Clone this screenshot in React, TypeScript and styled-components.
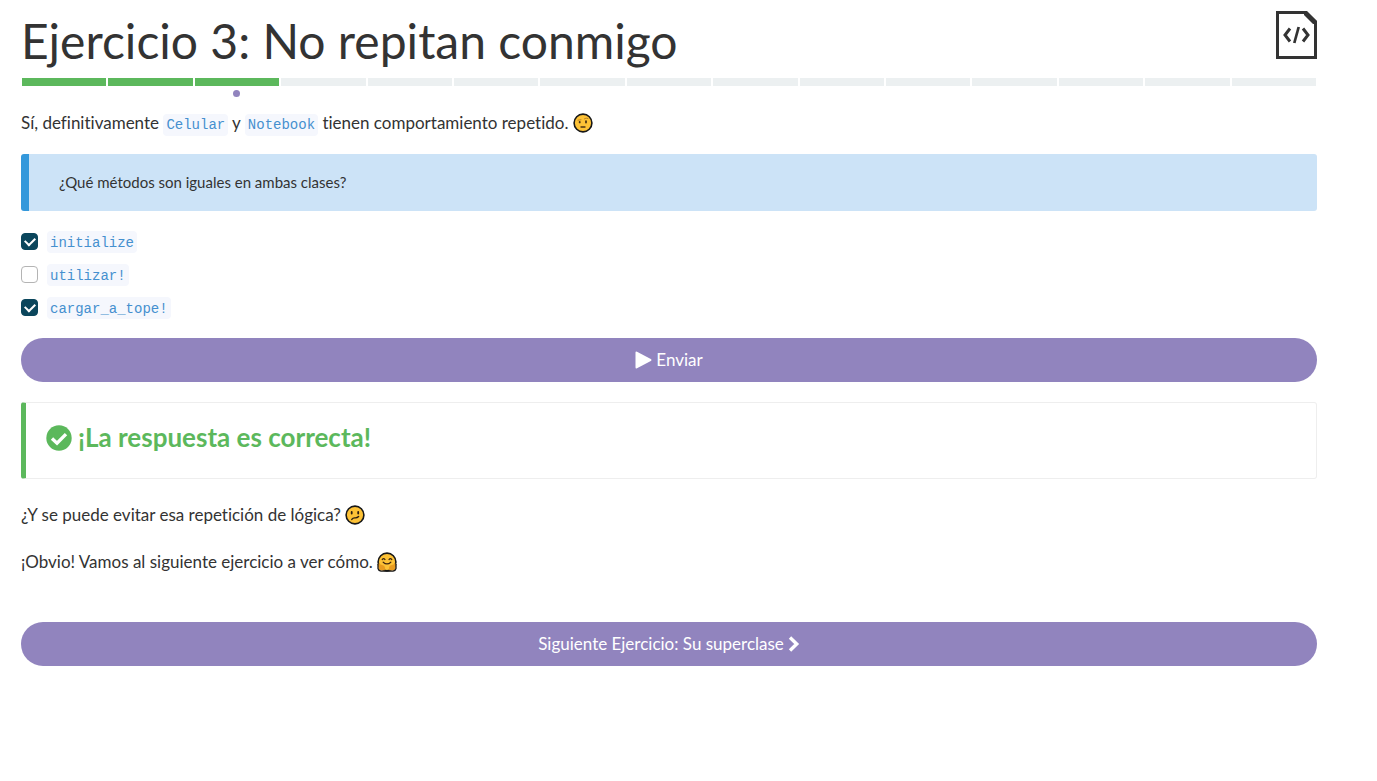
import React from 'react';
import styled, { createGlobalStyle } from 'styled-components';

const GlobalStyle = createGlobalStyle`
  * { box-sizing: border-box; }
  body {
    margin: 0;
    background: #fff;
    color: #333;
    font-family: Lato, "Open Sans", sans-serif;
    font-size: 17px;
    line-height: 24px;
    font-variant-ligatures: no-common-ligatures;
  }
`;

const Page = styled.main`
  display: flex;
  flex-direction: column;
  padding: 8px 60px 40px 21px;
`;

const Header = styled.header`
  display: flex;
  align-items: flex-start;
  justify-content: space-between;
  height: 70px;
`;

const Title = styled.h1`
  margin: 0;
  font-size: 48px;
  font-weight: 400;
  line-height: 66px;
`;

const FileLink = styled.a`
  display: block;
  margin-top: 3px;
  color: #333;
  svg { display: block; }
`;

const Progress = styled.ol`
  display: flex;
  gap: 2px;
  margin: 0;
  padding: 0 1px;
  list-style: none;
`;

const Step = styled.li<{ $done?: boolean }>`
  position: relative;
  flex: 1;
  height: 8px;
  background: ${(p) => (p.$done ? '#5cb85c' : '#ecf0f1')};
`;

const CurrentDot = styled.span`
  position: absolute;
  top: 12px;
  left: calc(50% - 4px);
  width: 7px;
  height: 7px;
  border-radius: 50%;
  background: #9184be;
`;

const Paragraph = styled.p`
  margin: 0 0 23px;
`;

const Intro = styled(Paragraph)`
  margin: 25px 0 18px;
`;

const Code = styled.code`
  display: inline-block;
  padding: 0 3px;
  border-radius: 4px;
  background: #f5f7fd;
  color: #4590cf;
  font-family: "Liberation Mono", monospace;
  font-size: 14px;
  line-height: 22px;
`;

const EmojiSvg = styled.svg`
  display: inline-block;
  width: 20px;
  height: 20px;
  vertical-align: -4px;
`;

const Question = styled.blockquote`
  margin: 0 0 20px;
  padding: 16px 30px 17px;
  border-left: 8px solid #3498db;
  border-radius: 3px;
  background: #cce3f7;
  font-size: 15px;
`;

const Choices = styled.form`
  display: flex;
  flex-direction: column;
`;

const Choice = styled.label`
  display: flex;
  align-items: center;
  gap: 9px;
  height: 22px;
  margin-bottom: 11px;
  ${Code} {
    padding-top: 2px;
    line-height: 20px;
  }
`;

const Checkbox = styled.input`
  appearance: none;
  display: grid;
  place-items: center;
  width: 17px;
  height: 17px;
  margin: 0 0 2px;
  border: 1px solid #b4b4b4;
  border-radius: 4px;
  background: #fff;
  &:checked {
    border-color: #0b465c;
    background: #0b465c;
  }
  &:checked::after {
    content: '';
    width: 8px;
    height: 5px;
    margin-bottom: 2px;
    border: solid #fff;
    border-width: 0 0 2px 2px;
    transform: rotate(-45deg);
  }
`;

const PillButton = styled.button`
  display: flex;
  align-items: center;
  justify-content: center;
  gap: 4px;
  width: 100%;
  height: 44px;
  margin-top: 8px;
  padding: 0 20px 1px;
  border: 0;
  border-radius: 22px;
  background: #9184be;
  color: #fff;
  font: inherit;
  font-variant-ligatures: inherit;
  font-size: 17px;
  text-decoration: none;
`;

const NextLink = styled(PillButton)`
  margin-top: 25px;
`;

const Result = styled.section`
  margin: 20px 0 24px;
  padding: 19px 20px 25px;
  border: 1px solid #eee;
  border-left: 5px solid #5cb85c;
  border-radius: 3px;
`;

const ResultTitle = styled.h2`
  display: flex;
  align-items: center;
  gap: 6px;
  margin: 0;
  color: #5cb85c;
  font-size: 26px;
  font-weight: 700;
  line-height: 31px;
`;

type Mood = 'doubtful' | 'confused' | 'hugging';
const moodLabels: Record<Mood, string> = {
  doubtful: 'Cara con ceja levantada',
  confused: 'Cara confundida',
  hugging: 'Cara abrazando',
};

function Emoji({ mood }: { mood: Mood }) {
  return (
    <EmojiSvg viewBox="0 0 20 20" role="img" aria-label={moodLabels[mood]}>
      <circle cx="10" cy="10" r="8.9" fill="#fdc236" stroke="#171717" strokeWidth="1.6" />
      {mood === 'doubtful' && (
        <g fill="none" stroke="#493213" strokeLinecap="round">
          <path d="M11.3 5.8 Q13 4.4 15 5.5 M5 7.2 L8 6.8" stroke="#b27b22" strokeWidth="0.9" />
          <path d="M6.7 8.8v.6 M13 8.2v1.4" strokeWidth="1.8" />
          <path d="M8 14H12" strokeWidth="1.3" />
        </g>
      )}
      {mood === 'confused' && (
        <g fill="none" stroke="#2b1c10" strokeLinecap="round">
          <path d="M6.7 7v1.5 M13.2 7v1.5" strokeWidth="1.8" />
          <path d="M6.8 14.4Q8 12.7 10 12.9T13.6 11.6" strokeWidth="1.4" />
        </g>
      )}
      {mood === 'hugging' && (
        <>
          <g fill="none" stroke="#3c2610" strokeWidth="1.2" strokeLinecap="round">
            <path d="M5.2 7.6Q6.6 5.5 8 7.6 M12 7.6Q13.4 5.5 14.8 7.6" />
            <path d="M6.2 10.2Q10 13.6 13.8 10.2" />
          </g>
          <path d="M1 12.4Q2 10.8 3 12.2L7.2 13.8Q9 15.8 7.5 18.6H3Q1 17 1 12.4Z M19 12.4Q18 10.8 17 12.2L12.8 13.8Q11 15.8 12.5 18.6H17Q19 17 19 12.4Z" fill="#e89c20" />
          <path d="M1 12v4.5Q1.5 18.7 4 19.1H16Q18.5 18.7 19 16.5V12" fill="none" stroke="#171717" strokeWidth="1.3" />
        </>
      )}
    </EmojiSvg>
  );
}

const TOTAL_STEPS = 15;
const CURRENT_STEP = 3;
const options = [
  { id: 'initialize', checked: true },
  { id: 'utilizar!', checked: false },
  { id: 'cargar_a_tope!', checked: true },
];

export default function App() {
  return (
    <>
      <GlobalStyle />
      <Page>
        <Header>
          <Title>Ejercicio 3: No repitan conmigo</Title>
          <FileLink href="#solucion" aria-label="Ver código">
            <svg width="41" height="48" viewBox="0 0 41 48" fill="none" stroke="currentColor">
              <path d="M1.5 1.5H29.5L39.5 11V46.5H1.5Z" strokeWidth="3" />
              <path d="M28 0H31L41 10V13H37L28 4Z" fill="currentColor" stroke="none" />
              <path d="M14 17.5L9 24L14 30.5 M27 17.5L32 24L27 30.5" strokeWidth="3" />
              <path d="M22.7 16L18.3 32" strokeWidth="2.7" />
            </svg>
          </FileLink>
        </Header>
        <Progress aria-label="Progreso">
          {Array.from({ length: TOTAL_STEPS }, (_, i) => (
            <Step key={i} $done={i < CURRENT_STEP}>
              {i === CURRENT_STEP - 1 && <CurrentDot />}
            </Step>
          ))}
        </Progress>
        <Intro>
          Sí, definitivamente <Code>Celular</Code> y <Code>Notebook</Code> tienen comportamiento repetido. <Emoji mood="doubtful" />
        </Intro>
        <Question>¿Qué métodos son iguales en ambas clases?</Question>
        <Choices onSubmit={(e) => e.preventDefault()}>
          {options.map((o) => (
            <Choice key={o.id} htmlFor={o.id}>
              <Checkbox type="checkbox" id={o.id} defaultChecked={o.checked} />
              <Code>{o.id}</Code>
            </Choice>
          ))}
          <PillButton type="submit">
            <svg width="17" height="18" viewBox="0 0 17 18" fill="currentColor" aria-hidden="true">
              <path d="M0.5 1.8Q.5 .1 2 .8L15.8 8Q17.2 9 15.8 10L2 17.2Q.5 17.9 .5 16.2Z" />
            </svg>
            Enviar
          </PillButton>
        </Choices>
        <Result>
          <ResultTitle>
            <svg width="26" height="26" viewBox="0 0 26 26" aria-hidden="true">
              <circle cx="13" cy="13" r="12.7" fill="currentColor" />
              <path d="M6 13.6L11 18.2L20 9.1" fill="none" stroke="#fff" strokeWidth="3.4" />
            </svg>
            ¡La respuesta es correcta!
          </ResultTitle>
        </Result>
        <Paragraph>
          ¿Y se puede evitar esa repetición de lógica? <Emoji mood="confused" />
        </Paragraph>
        <Paragraph>
          ¡Obvio! Vamos al siguiente ejercicio a ver cómo. <Emoji mood="hugging" />
        </Paragraph>
        <NextLink as="a" href="#siguiente">
          Siguiente Ejercicio: Su superclase
          <svg width="12" height="16" viewBox="0 0 12 16" fill="none" stroke="currentColor" strokeWidth="3.4" aria-hidden="true">
            <path d="M2 1.5L8.7 8L2 14.5" />
          </svg>
        </NextLink>
      </Page>
    </>
  );
}
